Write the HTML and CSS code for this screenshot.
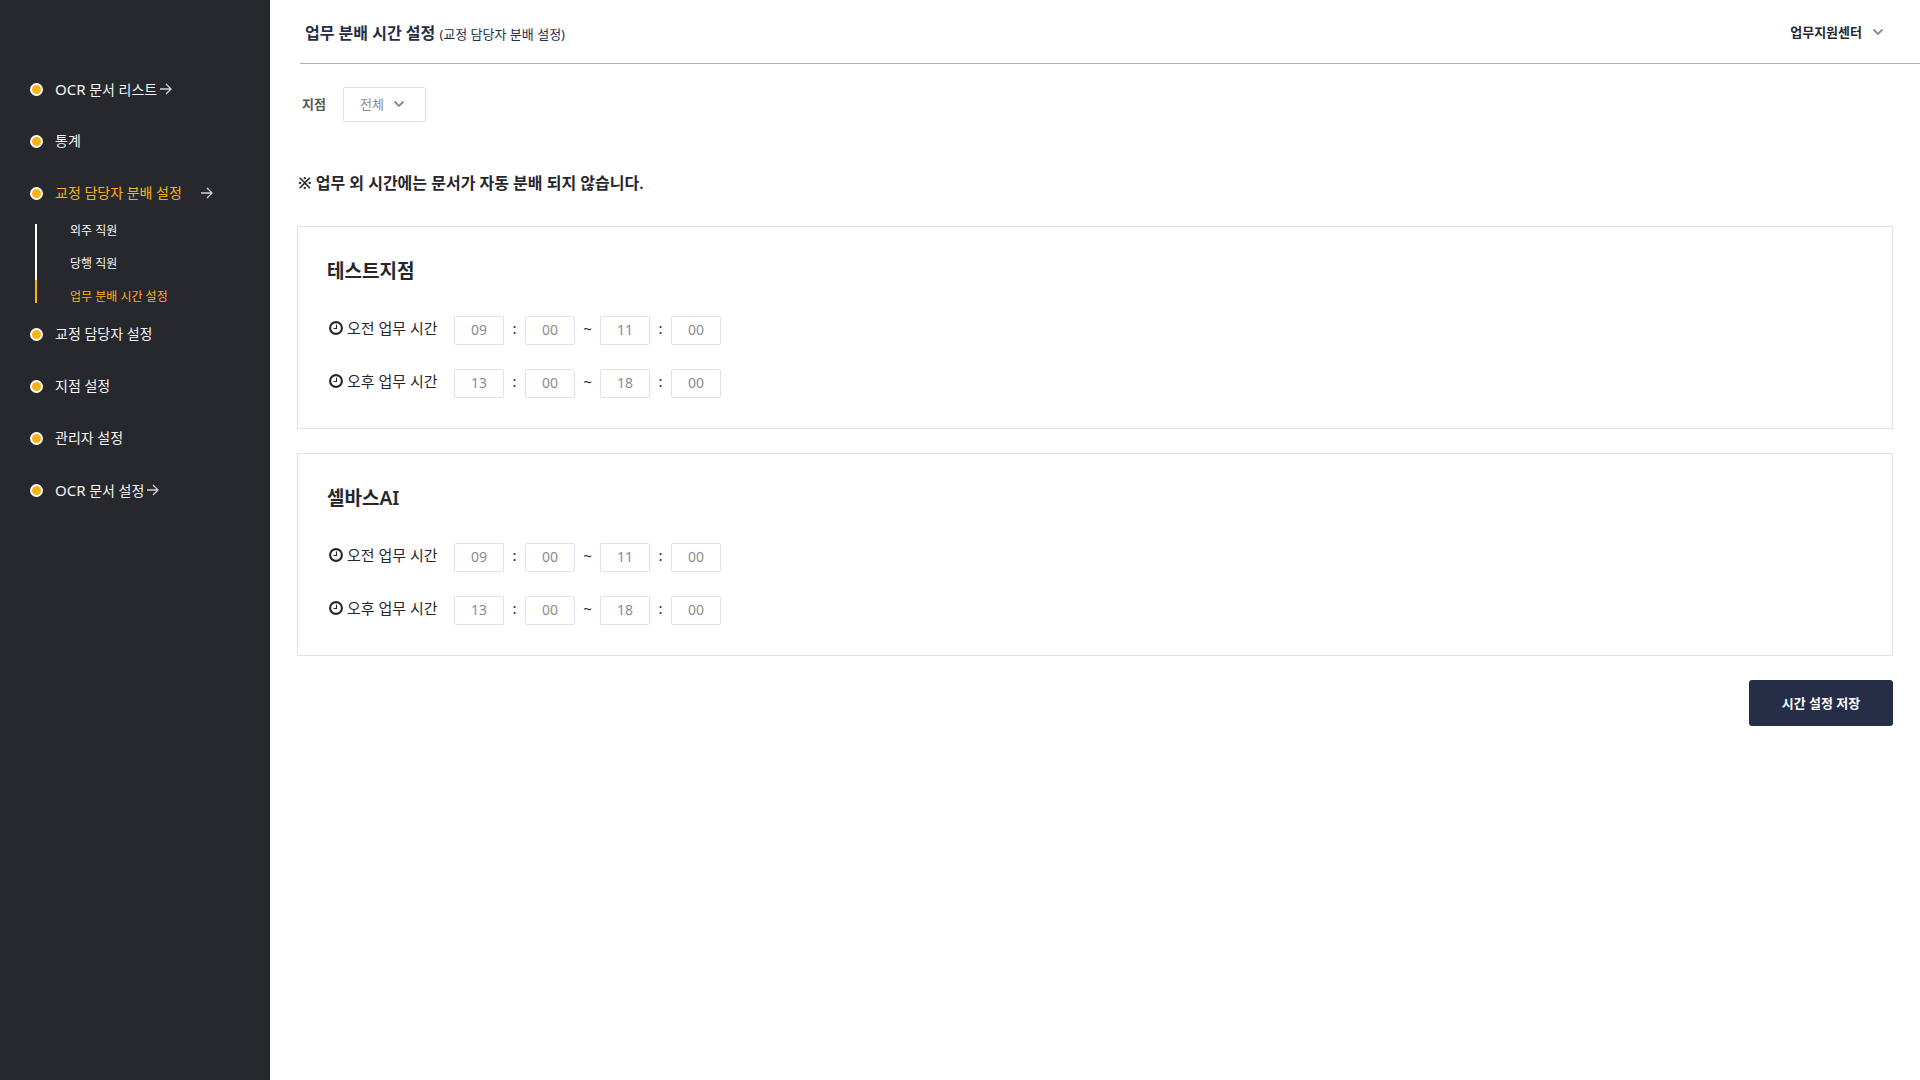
FILE: index.html
```html
<!DOCTYPE html>
<html lang="ko">
<head>
<meta charset="utf-8">
<meta name="viewport" content="width=device-width, initial-scale=1">
<title>업무 분배 시간 설정</title>
<link rel="stylesheet" href="styles.css">
</head>
<body>
<svg class="sprite" aria-hidden="true">
  <symbol id="arrow" viewBox="0 0 12 12"><path d="M0 6h11M6 1l5 5-5 5" fill="none" stroke="currentColor" stroke-width="1.3"/></symbol>
  <symbol id="chevron" viewBox="0 0 12 12"><path d="M1.5 3.5L6 8l4.500-4.500" fill="none" stroke="currentColor" stroke-width="1.8"/></symbol>
  <symbol id="clock" viewBox="0 0 14 14"><circle cx="7" cy="7" r="5.900" fill="none" stroke="currentColor" stroke-width="2.100"/><path d="M7.500 3.500v4H4.500" fill="none" stroke="currentColor" stroke-width="1.100"/></symbol>
</svg>
<div class="app">
  <nav class="sidebar">
    <ul class="menu">
      <li class="menu-item"><a class="menu-link" href="#"><span><span class="latin">OCR</span> 문서 리스트</span><svg class="arrow"><use href="#arrow"/></svg></a></li>
      <li class="menu-item"><a class="menu-link" href="#">통계</a></li>
      <li class="menu-item open">
        <a class="menu-link active" href="#">교정 담당자 분배 설정<svg class="arrow"><use href="#arrow"/></svg></a>
        <ul class="submenu">
          <li class="sub-item"><a class="sub-link" href="#">외주 직원</a></li>
          <li class="sub-item"><a class="sub-link" href="#">당행 직원</a></li>
          <li class="sub-item active"><a class="sub-link" href="#">업무 분배 시간 설정</a></li>
        </ul>
      </li>
      <li class="menu-item"><a class="menu-link" href="#">교정 담당자 설정</a></li>
      <li class="menu-item"><a class="menu-link" href="#">지점 설정</a></li>
      <li class="menu-item"><a class="menu-link" href="#">관리자 설정</a></li>
      <li class="menu-item"><a class="menu-link" href="#"><span><span class="latin">OCR</span> 문서 설정</span><svg class="arrow"><use href="#arrow"/></svg></a></li>
    </ul>
  </nav>
  <div class="page">
    <header class="header">
      <h1 class="title">업무 분배 시간 설정 <span class="subtitle">(교정 담당자 분배 설정)</span></h1>
      <button class="user" type="button">업무지원센터<svg class="chevron"><use href="#chevron"/></svg></button>
    </header>
    <main class="content">
      <div class="filter">
        <label class="filter-label" for="branch">지점</label>
        <div class="select">
          <select class="select-field" id="branch"><option>전체</option></select>
          <svg class="chevron"><use href="#chevron"/></svg>
        </div>
      </div>
      <p class="notice">※ 업무 외 시간에는 문서가 자동 분배 되지 않습니다.</p>
      <form class="form">
        <section class="card">
          <h2 class="card-title">테스트지점</h2>
          <div class="time-row">
            <label class="time-label" for="a1"><svg class="clock"><use href="#clock"/></svg>오전 업무 시간</label>
            <input class="time" id="a1" value="09"><span class="colon">:</span><input class="time" aria-label="오전 시작 분" value="00"><span class="tilde">~</span><input class="time" aria-label="오전 종료 시" value="11"><span class="colon">:</span><input class="time" aria-label="오전 종료 분" value="00">
          </div>
          <div class="time-row">
            <label class="time-label" for="a2"><svg class="clock"><use href="#clock"/></svg>오후 업무 시간</label>
            <input class="time" id="a2" value="13"><span class="colon">:</span><input class="time" aria-label="오후 시작 분" value="00"><span class="tilde">~</span><input class="time" aria-label="오후 종료 시" value="18"><span class="colon">:</span><input class="time" aria-label="오후 종료 분" value="00">
          </div>
        </section>
        <section class="card">
          <h2 class="card-title">셀바스AI</h2>
          <div class="time-row">
            <label class="time-label" for="b1"><svg class="clock"><use href="#clock"/></svg>오전 업무 시간</label>
            <input class="time" id="b1" value="09"><span class="colon">:</span><input class="time" aria-label="오전 시작 분" value="00"><span class="tilde">~</span><input class="time" aria-label="오전 종료 시" value="11"><span class="colon">:</span><input class="time" aria-label="오전 종료 분" value="00">
          </div>
          <div class="time-row">
            <label class="time-label" for="b2"><svg class="clock"><use href="#clock"/></svg>오후 업무 시간</label>
            <input class="time" id="b2" value="13"><span class="colon">:</span><input class="time" aria-label="오후 시작 분" value="00"><span class="tilde">~</span><input class="time" aria-label="오후 종료 시" value="18"><span class="colon">:</span><input class="time" aria-label="오후 종료 분" value="00">
          </div>
        </section>
        <button class="save" type="button">시간 설정 저장</button>
      </form>
    </main>
  </div>
</div>
</body>
</html>
```
FILE: styles.css
```css
*, *::before { box-sizing: border-box; }

body {
  margin: 0;
  background: #fff;
  color: #26272d;
  font-family: "Noto Sans", "Noto Sans CJK KR", sans-serif;
  font-size: 13px;
}

button, input, select { font: inherit; }
ul { list-style: none; margin: 0; padding: 0; }
a { color: inherit; text-decoration: none; }
svg { flex: none; }

.sprite { display: none; }
.arrow, .chevron { width: 12px; height: 12px; }
.clock { width: 14px; height: 14px; }

.app { display: flex; min-height: 100vh; }

.sidebar {
  flex: none;
  width: 270px;
  padding: 79px 0 32px 30px;
  background: #27282e;
  color: #f4f4f5;
}

.menu-item { margin-bottom: 32px; }
.menu-item.open { margin-bottom: 11px; }

.menu-link {
  display: flex;
  align-items: center;
  height: 20px;
  font-size: 14px;
  line-height: 20px;
}

.menu-link::before {
  content: "";
  width: 13px;
  height: 13px;
  margin-right: 12px;
  border: 2px solid #fff;
  border-radius: 50%;
  background: #f8b214;
}

.latin { font-size: 15px; }
.menu-link .arrow { margin-left: 3px; color: #d2d2d4; }
.open .menu-link .arrow { margin-left: 19px; }
.active { color: #f8b214; }

.submenu { margin-top: 11px; padding-left: 5px; }
.sub-item { display: flex; height: 33px; }
.sub-item::before {
  content: "";
  width: 2px;
  margin-right: 33px;
  background: #fff;
}
.sub-item.active::before { background: #f8b214; }
.sub-item:first-child::before { margin-top: 10px; }
.sub-item:last-child::before { margin-bottom: 10px; }
.sub-link { font-size: 12px; line-height: 33px; }

.page { flex: 1; min-width: 0; }

.header {
  display: flex;
  align-items: center;
  justify-content: space-between;
  height: 64px;
  margin-left: 30px;
  padding: 0 36px 0 5px;
  border-bottom: 1px solid #b0b0b0;
}

.title { margin: 0; color: #262d47; font-size: 16px; font-weight: 600; }
.subtitle { font-size: 13px; font-weight: 400; }

.user {
  display: flex;
  align-items: center;
  gap: 10px;
  padding: 0;
  border: 0;
  background: none;
  color: #26272d;
  font-weight: 600;
}
.chevron { color: #88898f; }

.content { padding: 23px 27px 40px; }

.filter { display: flex; align-items: center; gap: 17px; padding-left: 5px; }
.filter-label { padding-bottom: 2px; color: #55565c; font-weight: 600; }

.select { display: grid; align-items: center; width: 83px; height: 35px; }
.select > * { grid-area: 1 / 1; }
.select-field {
  appearance: none;
  width: 100%;
  height: 100%;
  padding: 0 16px 2px;
  border: 1px solid #e0e2eb;
  border-radius: 2px;
  background: #fff;
  color: #8b8c91;
}
.select .chevron { justify-self: end; margin: 0 21px 2px 0; pointer-events: none; }

.notice { margin: 48px 0 30px; padding-left: 1px; font-size: 16px; font-weight: 600; line-height: 26px; }

.form { display: flex; flex-direction: column; gap: 24px; }

.card { padding: 30px 29px; border: 1px solid #e0e2eb; }
.card-title { margin: 0 0 31px; font-size: 19px; font-weight: 600; line-height: 28px; }

.time-row { display: flex; align-items: center; }
.time-row + .time-row { margin-top: 24px; }

.time-label {
  display: flex;
  align-items: center;
  gap: 4px;
  width: 127px;
  height: 26px;
  padding: 0 0 6px 2px;
  font-size: 15px;
  line-height: 20px;
}

.time {
  width: 50px;
  height: 29px;
  padding: 0 0 2px;
  border: 1px solid #e0e2eb;
  border-radius: 2px;
  background: #fff;
  color: #8b8c91;
  font-size: 14px;
  text-align: center;
}

.colon, .tilde { height: 26px; font-size: 15px; line-height: 20px; text-align: center; }
.colon { width: 21px; }
.tilde { width: 25px; }

.save {
  align-self: flex-end;
  width: 144px;
  height: 46px;
  padding: 0 0 2px;
  border: 0;
  border-radius: 3px;
  background: #262d47;
  color: #fff;
  font-weight: 600;
}
```
